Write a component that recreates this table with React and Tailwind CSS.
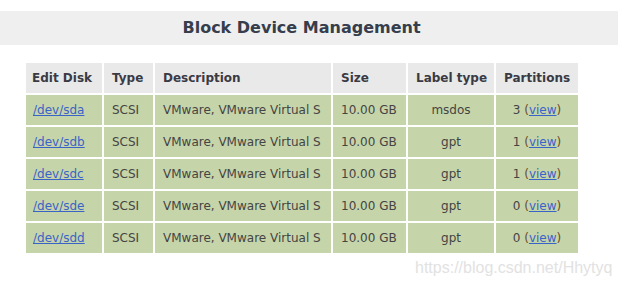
export default function App() {
  const rows = [
    ["/dev/sda", "msdos", "3"],
    ["/dev/sdb", "gpt", "1"],
    ["/dev/sdc", "gpt", "1"],
    ["/dev/sde", "gpt", "0"],
    ["/dev/sdd", "gpt", "0"],
  ];
  const td = "h-[30px] bg-[#c6d5a9] p-0 align-middle";
  return (
    <div className="relative w-[618px] h-[286px] bg-white overflow-hidden" style={{ fontFamily: '"DejaVu Sans", sans-serif' }}>
      <div className="h-[11px]" />
      <div className="h-[34px] bg-[#efefef] flex items-center justify-center pr-[15px]">
        <span className="text-[16px] font-bold text-[#363d4c] leading-none">Block Device Management</span>
      </div>
      <div className="pl-[24px] pt-[16px]">
        <table className="border-separate border-spacing-[2px] text-[12px] text-[#444]">
          <thead>
            <tr>
              <th className="w-[76px] h-[30px] bg-[#e9e9e9] text-left font-bold text-[#3a3a44] pl-[6px]">Edit Disk</th>
              <th className="w-[49px] h-[30px] bg-[#e9e9e9] text-left font-bold text-[#3a3a44] pl-[8px]">Type</th>
              <th className="w-[176px] h-[30px] bg-[#e9e9e9] text-left font-bold text-[#3a3a44] pl-[8px]">Description</th>
              <th className="w-[73px] h-[30px] bg-[#e9e9e9] text-left font-bold text-[#3a3a44] pl-[8px]">Size</th>
              <th className="w-[86px] h-[30px] bg-[#e9e9e9] text-left font-bold text-[#3a3a44] pl-[8px]">Label type</th>
              <th className="w-[82px] h-[30px] bg-[#e9e9e9] text-left font-bold text-[#3a3a44] pl-[8px]">Partitions</th>
            </tr>
          </thead>
          <tbody>
            {rows.map(([dev, label, parts]) => (
              <tr key={dev}>
                <td className={td + " pl-[7px]"}>
                  <a className="text-[#3a63c8] underline">{dev}</a>
                </td>
                <td className={td + " pl-[8px]"}>SCSI</td>
                <td className={td + " pl-[8px]"}>VMware, VMware Virtual S</td>
                <td className={td + " pl-[8px]"}>10.00 GB</td>
                <td className={td + " text-center"}>{label}</td>
                <td className={td + " text-center"}>
                  {parts} <span className="text-[#6b4a2a]">(</span><a className="text-[#3a63c8] underline">view</a><span className="text-[#6b4a2a]">)</span>
                </td>
              </tr>
            ))}
          </tbody>
        </table>
      </div>
      <div className="absolute left-[415px] top-[256px] text-[16px] text-[#e2e2e2]" style={{ fontFamily: '"Liberation Sans", sans-serif' }}>
        https://blog.csdn.net/Hhytyq
      </div>
    </div>
  );
}
